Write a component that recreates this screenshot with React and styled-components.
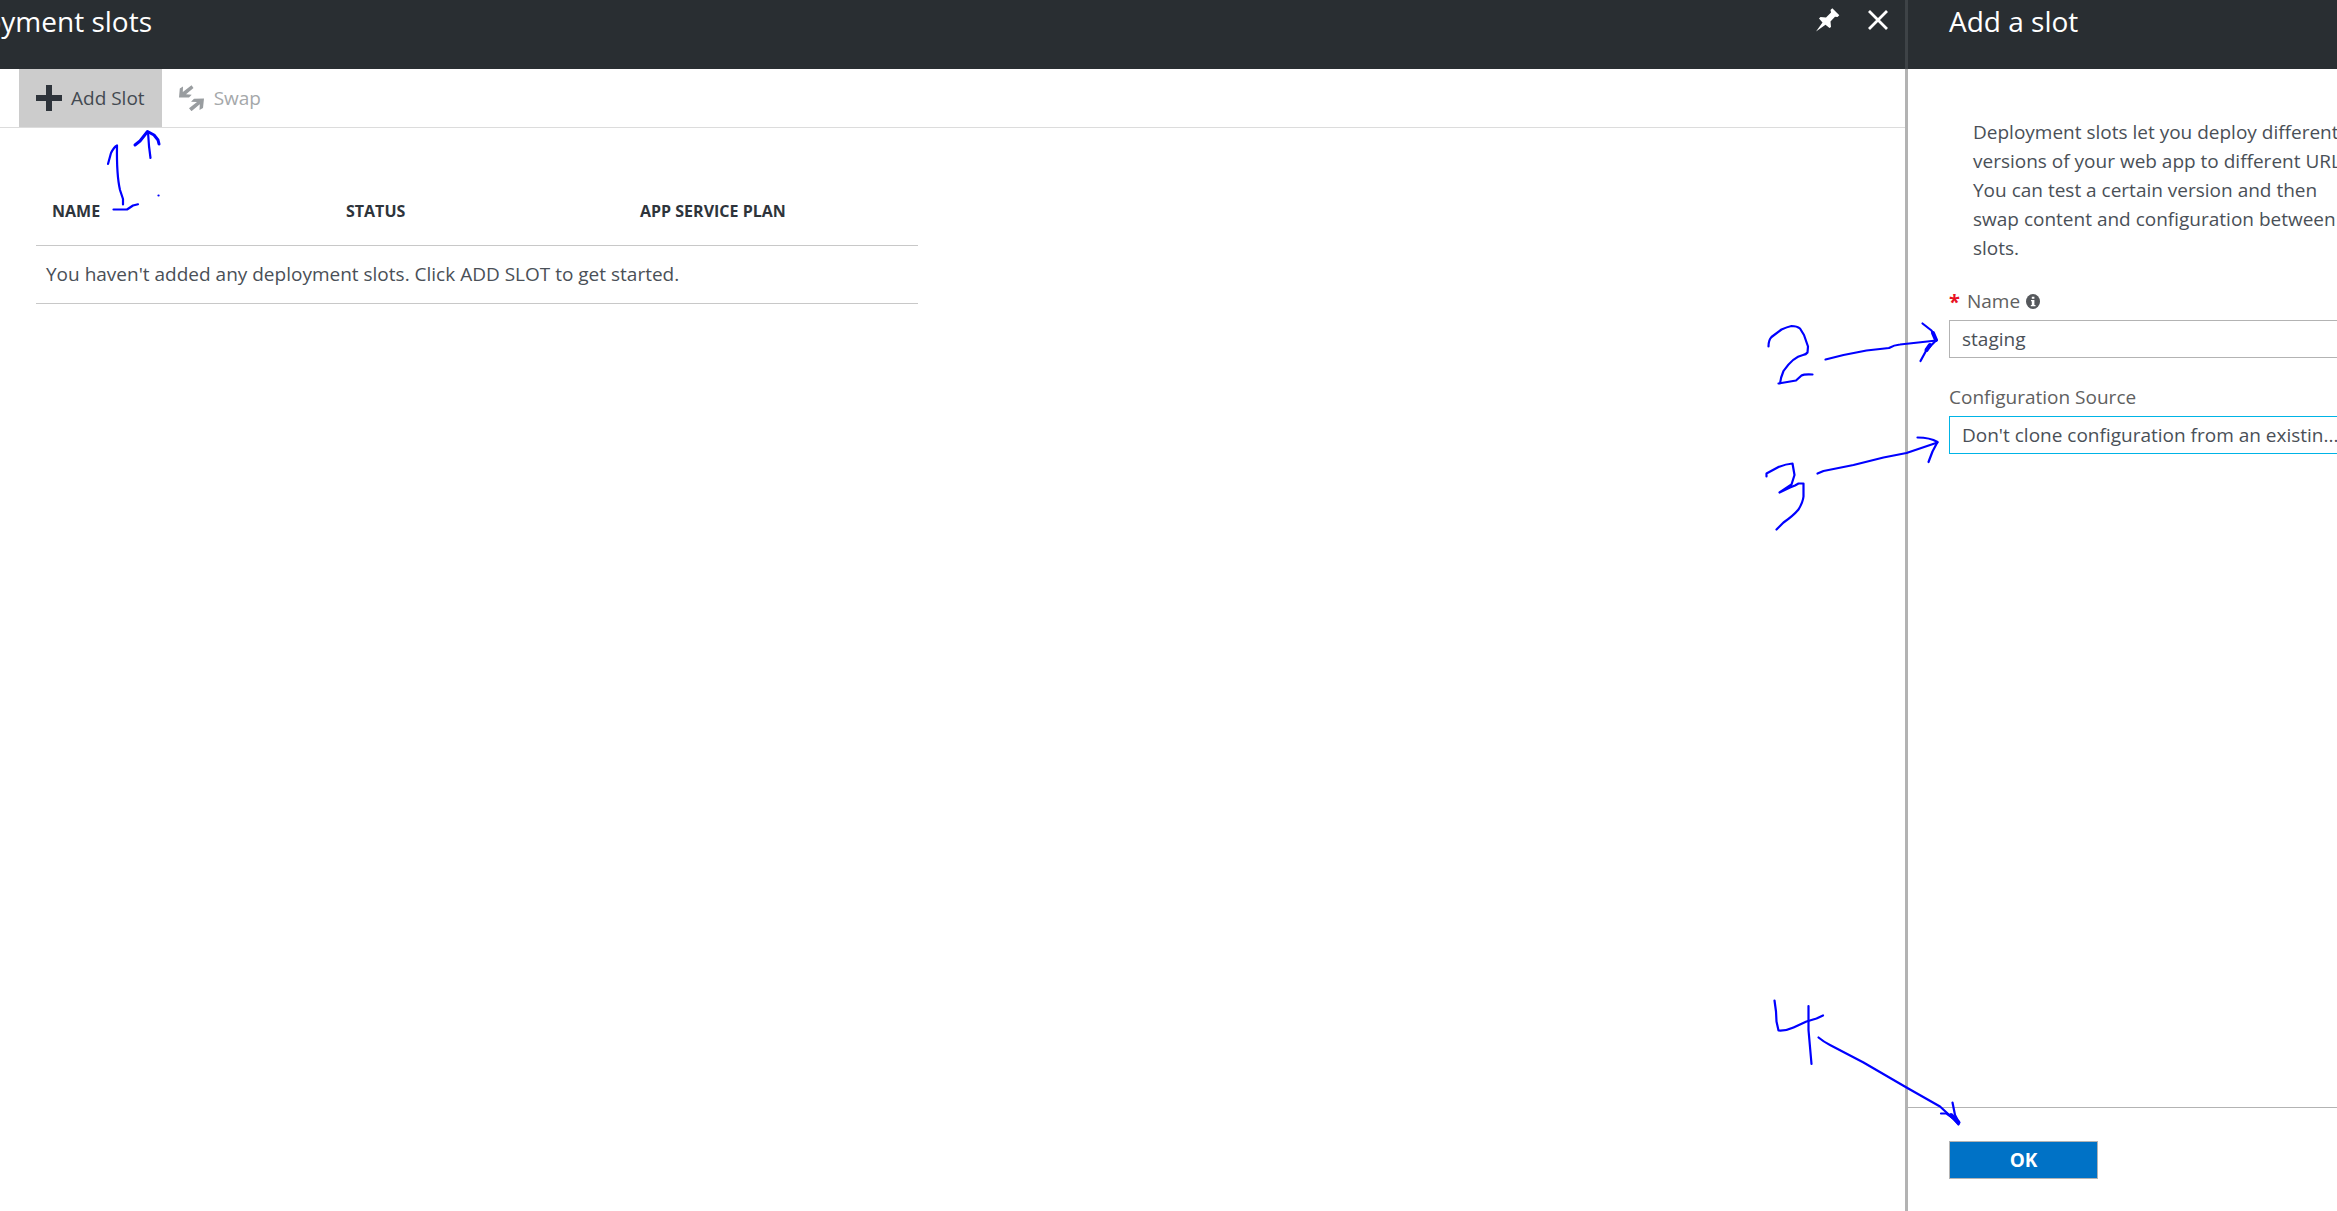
import React from 'react'
import styled, { createGlobalStyle } from 'styled-components'

const GlobalStyle = createGlobalStyle`
	* {
		box-sizing: border-box;
	}
	body {
		margin: 0;
		background: #fff;
		color: #4a5057;
		font-family: "Open Sans", "Noto Sans", sans-serif;
		font-size: 19px;
	}
	button, input, select {
		font: inherit;
		color: inherit;
	}
`;

const Page = styled.div`
	position: relative;
	display: flex;
	min-height: 100vh;
	overflow: hidden;
`;

const Blade = styled.section`
	position: relative;
	flex: 1;
	min-width: 0;
`;

const SideBlade = styled.section`
	position: relative;
	display: flex;
	flex-direction: column;
	flex: 0 0 432px;
	min-width: 0;
	border-left: 3px solid #b3b3b3;
`;

const Header = styled.header`
	display: flex;
	justify-content: space-between;
	height: 69px;
	margin-left: ${({ $side }) => ($side ? '-3px' : '0')};
	padding-left: ${({ $side }) => ($side ? '41px' : '0')};
	border-left: ${({ $side }) => ($side ? '3px solid #3e4347' : '0')};
	background: #292e32;
	color: #fff;
`;

const Title = styled.h1`
	display: flex;
	justify-content: flex-end;
	margin: 0;
	font-size: 28px;
	font-weight: 400;
	line-height: 42px;
	white-space: nowrap;
`;

const ScrolledTitle = styled(Title)`
	width: 152px;
	overflow: hidden;
`;

const HeaderActions = styled.div`
	display: flex;
	gap: 25px;
	padding: 7px 14px;
`;

const IconButton = styled.button`
	display: flex;
	width: 26px;
	height: 26px;
	padding: 0;
	border: 0;
	background: none;
`;

const Toolbar = styled.div`
	display: flex;
	height: 59px;
	padding-left: 19px;
	border-bottom: 1px solid #dcdcdc;
`;

const ToolButton = styled.button`
	display: flex;
	align-items: center;
	gap: 9px;
	padding: 0 17px;
	border: 0;
	background: ${({ $active }) => ($active ? '#ccc' : 'none')};
	color: ${({ $active }) => ($active ? '#434a51' : '#a5a8aa')};
`;

const SlotTable = styled.table`
	width: 882px;
	margin: 57px 0 0 36px;
	border-collapse: collapse;
	table-layout: fixed;
	text-align: left;
`;

const HeadCell = styled.th`
	height: 60px;
	padding: 0 16px 8px;
	border-bottom: 1px solid #c8c8c8;
	color: #2e343b;
	font-size: 16px;
	font-weight: 700;
`;

const Cell = styled.td`
	height: 58px;
	padding: 0 10px;
	border-bottom: 1px solid #c8c8c8;
`;

const Form = styled.form`
	display: flex;
	flex-direction: column;
	flex: 1;
`;

const Fields = styled.div`
	display: flex;
	flex-direction: column;
	flex: 1;
	width: 460px;
	padding: 49px 0 0 41px;
`;

const Intro = styled.p`
	width: 388px;
	margin: 0 0 21px 24px;
	line-height: 29px;
`;

const Label = styled.label`
	display: flex;
	align-items: center;
	gap: 6px;
	height: 34px;
	margin-bottom: 2px;
	color: #606060;
`;

const Required = styled.span`
	width: 12px;
	color: #e81123;
	font-size: 20px;
	font-weight: 700;
`;

const TextBox = styled.input`
	height: 38px;
	margin-bottom: 22px;
	padding: 0 12px;
	border: 1px solid #b3b3b3;
	background: #fff;
	outline: 0;
`;

const DropDown = styled.select`
	height: 38px;
	padding: 0 12px;
	border: 1px solid #00b4e6;
	border-radius: 0;
	background: #fff;
	appearance: none;
	outline: 0;
`;

const Footer = styled.footer`
	position: relative;
	height: 104px;
	padding: 33px 41px;
	border-top: 1px solid #b3b3b3;
`;

const OkButton = styled.button`
	width: 149px;
	height: 38px;
	padding: 0;
	border: 1px solid #b3b3b3;
	background: #0072c6;
	color: #fff;
	font-weight: 700;
`;

const Ink = styled.svg`
	position: absolute;
	z-index: 1;
	top: ${({ $top }) => $top}px;
	left: ${({ $left }) => $left}px;
	pointer-events: none;
	fill: none;
	stroke: #00f;
	stroke-width: 2.2;
	stroke-linecap: round;
	stroke-linejoin: round;
`;

const columns = ['NAME', 'STATUS', 'APP SERVICE PLAN']

function PinIcon() {
	return (
		<svg width="26" height="26" viewBox="0 0 26 26" fill="#fff">
			<path d="M2 24.500 8.500 15.500 5 11.500 6.500 10 12 10.500 17 5.500 16.500 3 18.300 1.300 25.300 8.300 23.500 10 21 9.800 16.500 14.500 17 20 15.500 21 11.500 17.800Z" />
		</svg>
	)
}

function CloseIcon() {
	return (
		<svg width="26" height="26" viewBox="0 0 26 26" stroke="#fff" strokeWidth="2.8">
			<path d="M4 4 22 22M22 4 4 22" />
		</svg>
	)
}

function PlusIcon() {
	return (
		<svg width="26" height="26" viewBox="0 0 26 26" fill="#2e343b">
			<path d="M10 0h6v10h10v6H16v10h-6V16H0v-6h10z" />
		</svg>
	)
}

function SwapIcon() {
	return (
		<svg width="26" height="26" viewBox="0 0 26 26" fill="#999da0">
			<path d="M12.500 .3 14.500 3 7 9.300 12.700 9.800 10 12.500 0 12.500 .8 3.500 4 1.500 3.800 7Z" />
			<path d="M12.500 26.200 10 23.300 18 17 12 16.700 15 13.800 25 13.500 24 23 20.500 25 20.800 19.300Z" />
		</svg>
	)
}

function InfoIcon() {
	return (
		<svg width="14" height="15" viewBox="0 0 14 15">
			<ellipse cx="7" cy="7.5" rx="7" ry="7.5" fill="#55585c" />
			<path d="M5.800 2.800h2.600v2H5.800zM5 6h3.400v5H9.500v1.200H4.800V11h1V7.200H5z" fill="#fff" />
		</svg>
	)
}

function App() {
	return (
		<Page>
			<GlobalStyle />

			<Blade>
				<Header>
					<ScrolledTitle>Deployment slots</ScrolledTitle>
					<HeaderActions>
						<IconButton aria-label="Pin"><PinIcon /></IconButton>
						<IconButton aria-label="Close"><CloseIcon /></IconButton>
					</HeaderActions>
				</Header>

				<Toolbar>
					<ToolButton $active><PlusIcon />Add Slot</ToolButton>
					<ToolButton disabled><SwapIcon />Swap</ToolButton>
				</Toolbar>

				<SlotTable>
					<thead>
						<tr>
							{columns.map(name => <HeadCell key={name}>{name}</HeadCell>)}
						</tr>
					</thead>
					<tbody>
						<tr>
							<Cell colSpan={3}>You haven't added any deployment slots. Click ADD SLOT to get started.</Cell>
						</tr>
					</tbody>
				</SlotTable>

				<Ink $top={125} $left={100} width="70" height="90" viewBox="100 125 70 90">
					<path d="M108 164 111 153Q114 147 117 145.500Q116.500 175 120 190L123 199V204.500" />
					<path d="M113.500 209.500H127L133 205.500 138 204.300" />
					<path d="M148 132 149 146 150.500 158" />
					<path d="M135 145 140 141 147.500 131.500 154 135 158 140 159 144" strokeWidth="3" />
					<path d="M158.500 195.500h.1" />
				</Ink>
			</Blade>

			<SideBlade>
				<Header $side>
					<Title>Add a slot</Title>
				</Header>

				<Form onSubmit={e => e.preventDefault()}>
					<Fields>
						<Intro>
							Deployment slots let you deploy different versions of your web app to different URLs.
							You can test a certain version and then swap content and configuration between slots.
						</Intro>
						<Label htmlFor="slot-name">
							<Required>*</Required>
							Name
							<InfoIcon />
						</Label>
						<TextBox id="slot-name" type="text" defaultValue="staging" />
						<Label htmlFor="slot-source">Configuration Source</Label>
						<DropDown id="slot-source">
							<option>Don't clone configuration from an existin...</option>
						</DropDown>
					</Fields>

					<Footer>
						<OkButton type="submit">OK</OkButton>
						<Ink $top={-118} $left={-148} width="210" height="140" viewBox="1760 990 210 140">
							<path d="M1774.500 1000.500 1776 1011.500 1776.500 1021.500 1778.500 1030.500Q1786 1031 1793.500 1027.500L1806.500 1021.500 1816.500 1018.500 1823 1015.500" />
							<path d="M1808.500 1006V1030L1811.500 1064" />
							<path d="M1818.500 1037.500Q1824 1042 1830 1045L1863.500 1062.500 1906.500 1087.500 1940 1106.500 1958.500 1123.500" />
							<path d="M1941 1113.500H1946.500L1953.500 1118.500 1958.500 1124.500M1952.500 1102.500 1955 1115 1959 1122.500" />
							<path d="M1951 1115 1958.500 1122.500" strokeWidth="4" />
						</Ink>
					</Footer>
				</Form>

				<Ink $top={310} $left={-148} width="190" height="230" viewBox="1760 310 190 230">
					<path d="M1768.500 346.500Q1768.500 340 1771.500 337L1781.500 329.500Q1787 327 1791.500 326 1797 326 1800 328.500L1804 335 1808 346.500 1807.500 352.500Q1806 354.500 1803 355 1793 357 1783.500 371 1780.500 378 1780 383.500H1778.500L1796 380.500 1801.500 375.500Q1804 374 1812.500 374.500" />
					<path d="M1825.500 359.500 1843.500 355 1866.500 350.500 1889 348Q1894 345 1900 344.500L1936.500 340.500" />
					<path d="M1922.500 323.500 1931.500 330.500 1936.500 340 1926.500 350 1920.500 361" />
					<path d="M1930 345 1926.500 350M1933 333 1936 340" strokeWidth="4" />
					<path d="M1766.500 476.500V473.500L1778.500 467Q1786 464 1792.500 463.500L1794.500 475 1791.500 484.500 1779.500 492.500 1790 487.500 1795 485.500 1798.500 483.500H1803.500V496.500Q1803 502 1798.500 509.500 1793 516 1783.500 522.500L1776.500 529.500" />
					<path d="M1817.500 473.500 1823.500 471 1853.500 465 1883.500 457.500 1906.500 453 1937.500 442.500" />
					<path d="M1917.500 437.500Q1930 437.500 1937.500 442L1932.500 451.500 1928.500 462" />
				</Ink>
			</SideBlade>
		</Page>
	)
}

export default App
